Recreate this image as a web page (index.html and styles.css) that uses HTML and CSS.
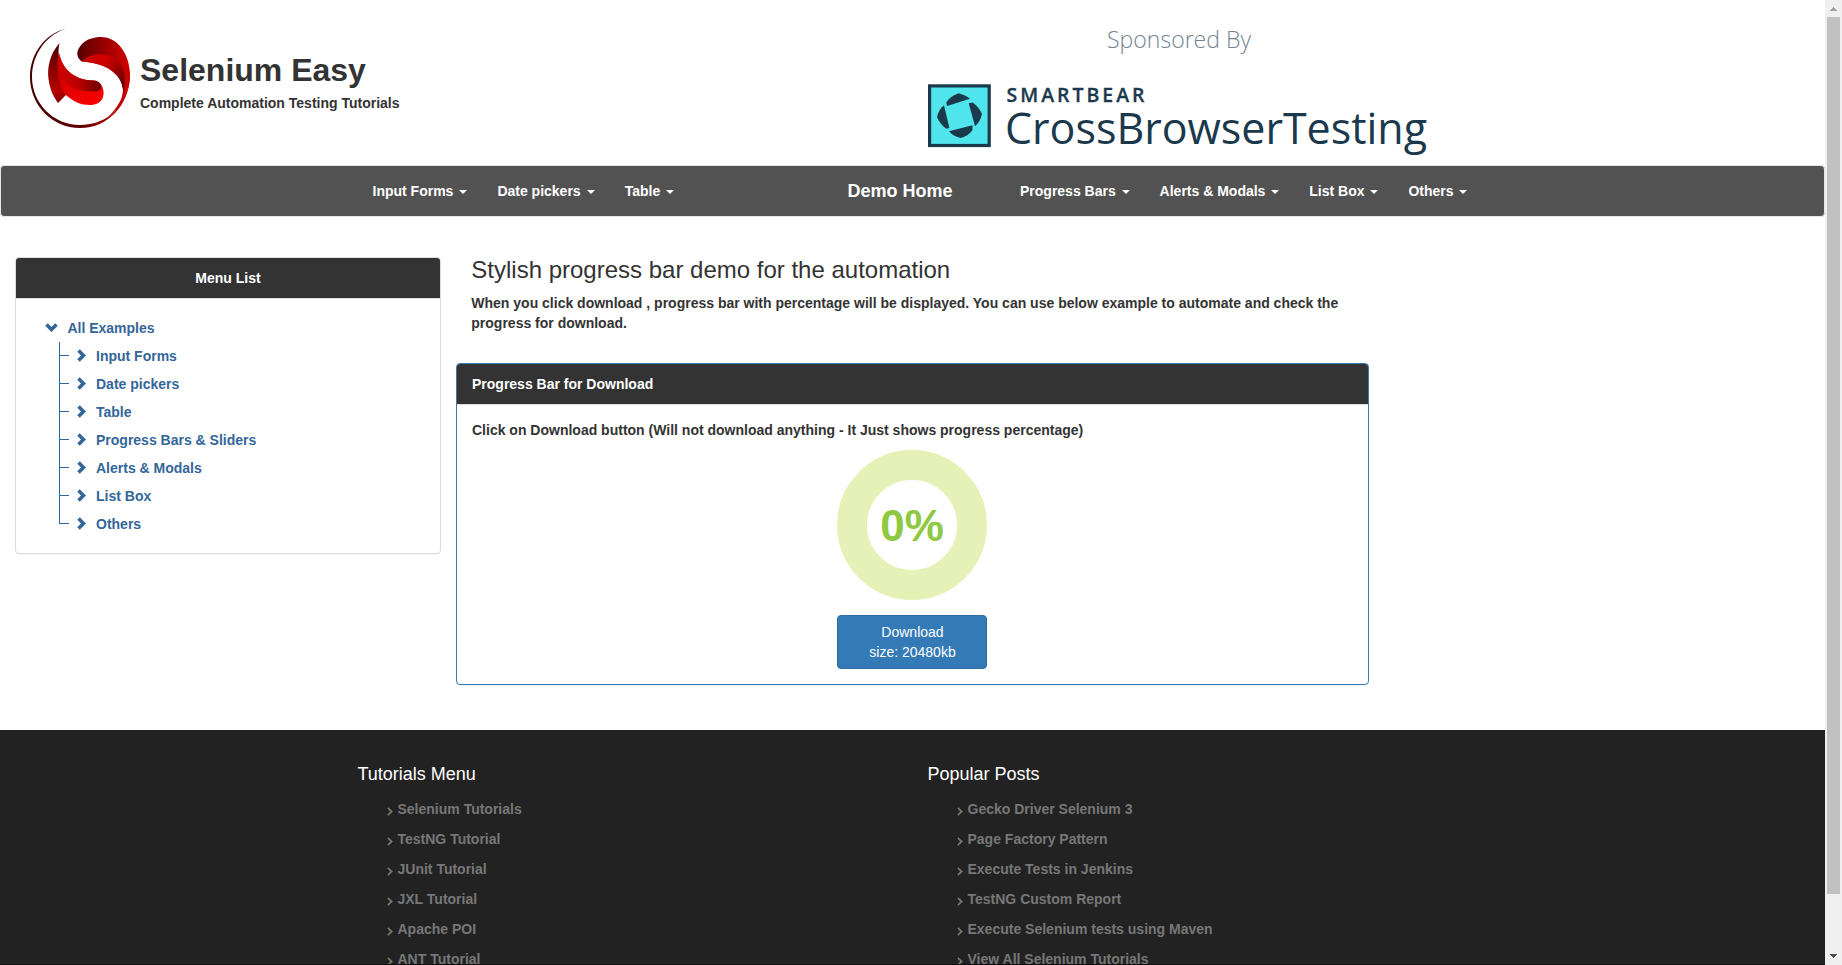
FILE: index.html
```html
<!DOCTYPE html>
<html lang="en">
<head>
<meta charset="utf-8">
<title>Selenium Easy - Download Progress Bar Demo</title>
<link rel="stylesheet" href="styles.css">
</head>
<body>
<div class="page">
  <header class="header">
    <div class="brand">
      <svg class="brand-logo" viewBox="0 0 100 100" width="100" height="100">
        <defs>
          <linearGradient id="ring" x1="0" y1="0" x2="1" y2="0"><stop offset="0" stop-color="#400"/><stop offset=".5" stop-color="#600002"/><stop offset=".9" stop-color="#c00000"/><stop offset="1" stop-color="#d00000"/></linearGradient>
          <linearGradient id="top" x1="0" y1="0" x2="1" y2="0"><stop offset="0" stop-color="#500"/><stop offset=".75" stop-color="#b80000"/><stop offset="1" stop-color="#d00000"/></linearGradient>
          <linearGradient id="fold" x1="0" y1="0" x2="1" y2=".7"><stop offset="0" stop-color="#c80000"/><stop offset=".45" stop-color="#d00000"/><stop offset="1" stop-color="#6a0000"/></linearGradient>
          <linearGradient id="left" x1="0" y1="0" x2="0" y2="1"><stop offset="0" stop-color="#4a0000"/><stop offset=".5" stop-color="#900000"/><stop offset=".8" stop-color="#b80000"/><stop offset="1" stop-color="#800000"/></linearGradient>
          <linearGradient id="low" x1="0" y1="0" x2=".8" y2="1"><stop offset="0" stop-color="#b00000"/><stop offset=".5" stop-color="#e00000"/><stop offset="1" stop-color="#f80000"/></linearGradient>
          <linearGradient id="shade" x1="0" y1="0" x2="1" y2="0"><stop offset="0" stop-color="#d00000"/><stop offset=".5" stop-color="#b80000"/><stop offset="1" stop-color="#690000"/></linearGradient>
        </defs>
        <path fill="url(#ring)" d="M39 0C16 4 0 25 0 49c0 28 22 51 50 51 30 0 51-26 50-55l-7 17c0 21-20 35-43 35C23 97 2 75 2 49 2 26 17 5 39 0z"/>
        <path fill="url(#top)" d="M52 33.500C44 28 48 20 52 16c5-5 12-7 19-7 17 0 28 17 29 36 0 18-8 34-22 44 10-10 15-19 15-27C92 42 72 35 52 33.500z"/>
        <path fill="url(#fold)" d="M52 33.500c8-10 30-10 38 2 5 8 6 16 3.500 29C92 43 72 35 52 33.500z"/>
        <path fill="url(#left)" d="M29.500 15C20 26 17 39 18.500 51c1.500 12 6 19 9.500 24l8-8 8-6-15-31c-1-5-.5-10 .5-15z"/>
        <path fill="url(#low)" d="M29 25c-3 15-2 30 7 42 8 7 15 10 24 10 12 0 15-9 13-16-1-5-4-8-10-8.500C47 52 33 44 29 25z"/>
        <path fill="url(#shade)" d="M29 25c4 19 18 27 34 27.500 4 0 7 2 8 5 1 4-3 6-7 6C46 64 33 56 29 45c-2-7-1.500-13 0-20z"/>
      </svg>
      <div class="brand-text">
        <h1 class="brand-name">Selenium Easy</h1>
        <p class="brand-tagline">Complete Automation Testing Tutorials</p>
      </div>
    </div>
    <svg class="sponsor" viewBox="928 0 512 165" width="512" height="165">
      <text class="sponsor-label" x="1107" y="48" textLength="144" lengthAdjust="spacingAndGlyphs">Sponsored By</text>
      <rect x="929.6" y="85.900" width="59.600" height="59.600" fill="#50e5ec" stroke="#1b394c" stroke-width="3.200"/>
      <g fill="#1b394c">
        <path d="M947 106l-.8-3.500C949 98 953 95.500 958.500 93.200 963 94.200 967 96 970 98.800z"/>
        <path d="M968.700 103.300l4-.8C977 105.500 980 109.500 982 114 980.800 119.500 978.500 123 975 126.200z"/>
        <path d="M949 131.200l23.500-5.900v4.700c-2.700 4-6.500 6.500-11.800 8-4.500-1-8.500-3-11.700-6.800z"/>
        <path d="M944 105.300l5.400 22.600-3.200.8C942 125.500 939 122 937 117c1.200-5 3.500-9 7-11.700z"/>
      </g>
      <text class="sponsor-owner" x="1006.500" y="102" textLength="138">SMARTBEAR</text>
      <text class="sponsor-product" x="1005" y="144" textLength="422" lengthAdjust="spacingAndGlyphs">CrossBrowserTesting</text>
    </svg>
  </header>

  <nav class="navbar">
    <ul class="nav nav-left">
      <li>Input Forms <b class="caret"></b></li>
      <li>Date pickers <b class="caret"></b></li>
      <li>Table <b class="caret"></b></li>
    </ul>
    <a class="nav-home">Demo Home</a>
    <ul class="nav nav-right">
      <li>Progress Bars <b class="caret"></b></li>
      <li>Alerts &amp; Modals <b class="caret"></b></li>
      <li>List Box <b class="caret"></b></li>
      <li>Others <b class="caret"></b></li>
    </ul>
  </nav>

  <div class="content">
    <aside class="panel menu-panel">
      <div class="panel-heading menu-heading">Menu List</div>
      <div class="tree">
        <div class="tree-root"><svg class="chevron-down" viewBox="0 0 13 9" width="13" height="9"><path d="M1.500 1.500l5 5 5-5"/></svg>All Examples</div>
        <ul class="tree-list">
          <li><svg class="chevron" viewBox="0 0 9 13" width="9" height="13"><path d="M1.500 1.500l5 5-5 5"/></svg>Input Forms</li>
          <li><svg class="chevron" viewBox="0 0 9 13" width="9" height="13"><path d="M1.500 1.500l5 5-5 5"/></svg>Date pickers</li>
          <li><svg class="chevron" viewBox="0 0 9 13" width="9" height="13"><path d="M1.500 1.500l5 5-5 5"/></svg>Table</li>
          <li><svg class="chevron" viewBox="0 0 9 13" width="9" height="13"><path d="M1.500 1.500l5 5-5 5"/></svg>Progress Bars &amp; Sliders</li>
          <li><svg class="chevron" viewBox="0 0 9 13" width="9" height="13"><path d="M1.500 1.500l5 5-5 5"/></svg>Alerts &amp; Modals</li>
          <li><svg class="chevron" viewBox="0 0 9 13" width="9" height="13"><path d="M1.500 1.500l5 5-5 5"/></svg>List Box</li>
          <li><svg class="chevron" viewBox="0 0 9 13" width="9" height="13"><path d="M1.500 1.500l5 5-5 5"/></svg>Others</li>
        </ul>
      </div>
    </aside>
    <main class="main">
      <div class="intro">
        <h2 class="intro-title">Stylish progress bar demo for the automation</h2>
        <p class="intro-text">When you click download , progress bar with percentage will be displayed. You can use below example to automate and check the progress for download.</p>
      </div>
      <section class="panel demo-panel">
        <div class="panel-heading">Progress Bar for Download</div>
        <div class="demo-body">
          <p class="demo-text">Click on Download button (Will not download anything - It Just shows progress percentage)</p>
          <div class="ring">0%</div>
          <button class="download">Download<br>size: 20480kb</button>
        </div>
      </section>
    </main>
  </div>

  <footer class="footer">
    <div class="footer-col">
      <h3 class="footer-title">Tutorials Menu</h3>
      <ul class="footer-list">
        <li>Selenium Tutorials</li>
        <li>TestNG Tutorial</li>
        <li>JUnit Tutorial</li>
        <li>JXL Tutorial</li>
        <li>Apache POI</li>
        <li>ANT Tutorial</li>
      </ul>
    </div>
    <div class="footer-col">
      <h3 class="footer-title">Popular Posts</h3>
      <ul class="footer-list">
        <li>Gecko Driver Selenium 3</li>
        <li>Page Factory Pattern</li>
        <li>Execute Tests in Jenkins</li>
        <li>TestNG Custom Report</li>
        <li>Execute Selenium tests using Maven</li>
        <li>View All Selenium Tutorials</li>
      </ul>
    </div>
  </footer>
</div>
<div class="scrollbar">
  <svg width="17" height="17" viewBox="0 0 17 17" shape-rendering="crispEdges"><path fill="#a3a3a3" d="M5 11V10h1V9h1V8h1V7h1v1h1v1h1v1h1v1z"/></svg>
  <div class="scrollbar-thumb"></div>
  <svg width="17" height="17" viewBox="0 0 17 17" shape-rendering="crispEdges"><path fill="#505050" d="M5 6v1h1v1h1v1h1v1h1V9h1V8h1V7h1V6z"/></svg>
</div>
</body>
</html>
```
FILE: styles.css
```css
* { box-sizing: border-box; }
html, body { margin: 0; height: 965px; overflow: hidden; }
body {
  display: flex;
  background: #fff;
  color: #333;
  font: bold 14px/20px "Liberation Sans", Arial, sans-serif;
}
h1, h2, h3, p, ul { margin: 0; padding: 0; }
ul { list-style: none; }

.page { width: 1825px; height: 965px; overflow: hidden; display: flex; flex-direction: column; }

/* Header */
.header { display: flex; justify-content: space-between; height: 165px; padding: 0 385px 0 30px; }
.brand { display: flex; padding-top: 28px; }
.brand-text { padding: 24px 0 0 10px; }
.brand-name { font-size: 32px; line-height: 36px; }
.brand-tagline { padding-top: 5px; }
.sponsor { display: block; }
.sponsor-label { font: 300 24.5px "Open Sans", sans-serif; fill: #748494; }
.sponsor-owner { font: 600 19.5px "Open Sans", sans-serif; fill: #1b394c; stroke: #1b394c; stroke-width: .3; }
.sponsor-product { font: 400 44px "Open Sans", sans-serif; fill: #1b394c; }

/* Navigation */
.navbar {
  display: flex;
  height: 52px;
  flex: none;
  padding-left: 356.5px;
  border: 1px solid #e7e7e7;
  border-radius: 4px;
  background: #525252;
  color: #fff;
}
.nav { display: flex; }
.nav li { padding: 15px; white-space: nowrap; }
.nav-left { width: 475px; gap: .1px; }
.nav-home { width: 172.5px; padding: 15px; font-size: 18px; white-space: nowrap; }
.caret {
  display: inline-block;
  margin-left: 2px;
  vertical-align: middle;
  border-top: 4px solid #fff;
  border-left: 4px solid transparent;
  border-right: 4px solid transparent;
}

/* Content */
.content { display: flex; flex: none; height: 513px; padding: 40px 15px 0; gap: 15px; align-items: flex-start; }
.panel { border: 1px solid #ddd; border-radius: 4px; background: #fff; box-shadow: 0 1px 1px rgba(0, 0, 0, .05); }
.panel-heading {
  height: 41px;
  padding: 10px 15px;
  border-bottom: 1px solid #ddd;
  border-radius: 3px 3px 0 0;
  background: #333;
  color: #fff;
}
.menu-panel { width: 426px; height: 297px; }
.menu-heading { text-align: center; }
.tree { padding: 15px 29px; color: #369; }
.tree-root { display: flex; align-items: center; height: 28px; gap: 9.4px; }
.chevron-down, .chevron { flex: none; fill: none; stroke: #369; stroke-width: 3.6; }
.chevron-down { margin-top: -1px; }
.tree-list { padding-left: 14px; }
.tree-list li { position: relative; display: flex; align-items: center; height: 28px; padding-left: 17.5px; gap: 10.5px; }
.tree-list .chevron { margin-top: -1px; }
.tree-list li::before { content: ""; position: absolute; left: 0; top: 0; height: 100%; border-left: 1px solid #369; }
.tree-list li:last-child::before { height: 14px; }
.tree-list li::after { content: ""; position: absolute; left: 0; top: 13px; width: 10px; border-top: 1px solid #369; }

.main { width: 913px; }
.intro { height: 106px; padding: 0 15px 0 15.3px; }
.intro-title { font-size: 24px; line-height: 26px; font-weight: 400; }
.intro-text { padding-top: 10px; }
.demo-panel { height: 322px; border-color: #337ab7; }
.demo-body { display: flex; flex-direction: column; align-items: center; padding: 15px 16px 15px 15px; }
.demo-text { align-self: stretch; padding-bottom: 10px; }
.ring {
  display: flex;
  align-items: center;
  justify-content: center;
  width: 150px;
  height: 150px;
  padding-top: 1px;
  border: 30px solid #e6f1b7;
  border-radius: 50%;
  color: #8fc842;
  font-size: 44px;
}
.download {
  width: 150px;
  height: 54px;
  margin-top: 15px;
  padding: 6px 11px 6px 12px;
  border: 1px solid #2e6da4;
  border-radius: 4px;
  background: #337ab7;
  color: #fff;
  font: 14px/20px "Liberation Sans", Arial, sans-serif;
}

/* Footer */
.footer { display: flex; flex: none; height: 235px; padding: 34px 0 0 357.5px; background: #222; border-bottom: 1px solid #111; overflow: hidden; }
.footer-col { width: 570px; flex: none; }
.footer-title { color: #fff; font-size: 18px; font-weight: 400; line-height: 20px; }
.footer-list { padding: 10px 0 0 40px; color: #777; }
.footer-list li { position: relative; height: 30px; line-height: 30px; }
.footer-list li::before {
  content: "";
  position: absolute;
  left: -12.5px;
  top: 14px;
  width: 5px;
  height: 5px;
  border: solid #77776a;
  border-width: 2px 2px 0 0;
  transform: rotate(45deg) scale(.85);
}

/* Scrollbar */
.scrollbar { display: flex; flex-direction: column; align-items: center; width: 17px; height: 965px; background: #f0f0f0; }
.scrollbar-thumb { width: 13px; height: 877px; margin-bottom: 54px; background: #c1c1c1; }
.scrollbar svg { display: block; flex: none; }
```
